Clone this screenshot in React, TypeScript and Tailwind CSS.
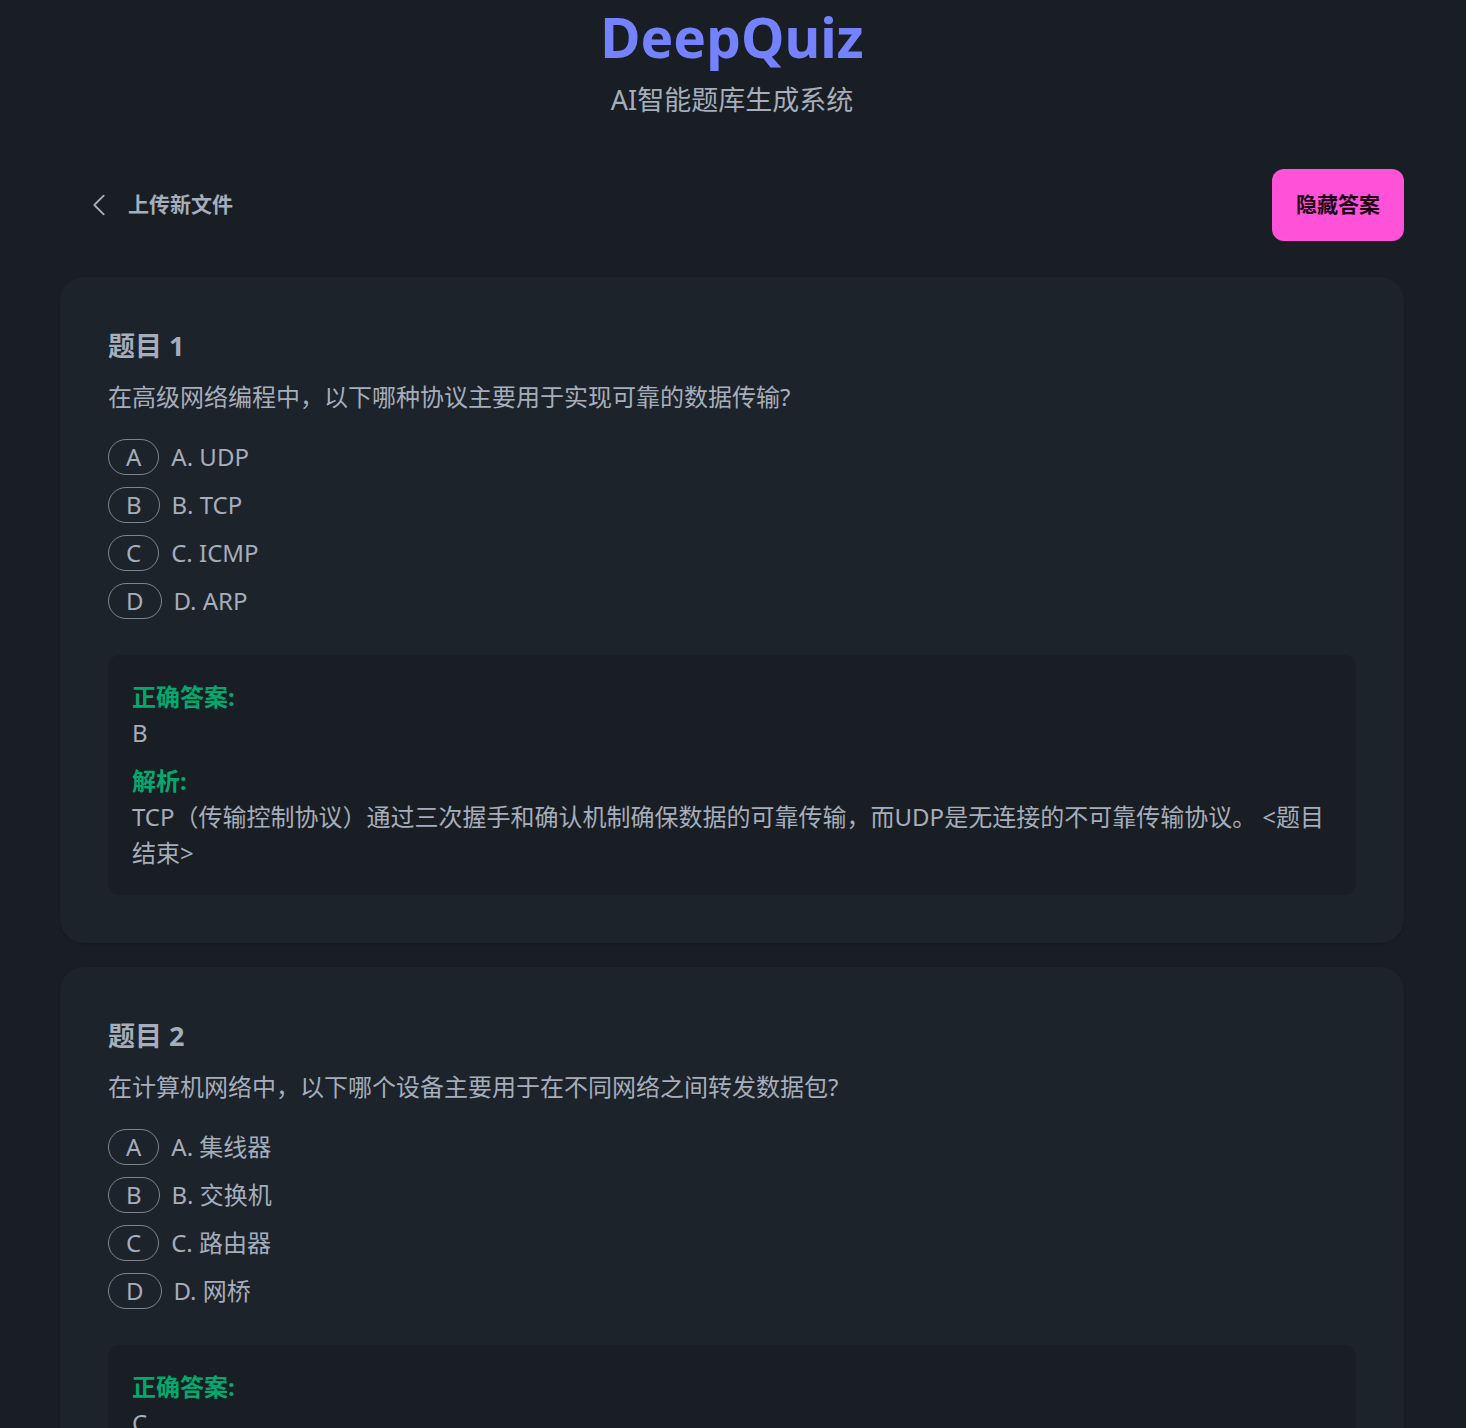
import React, { useState } from 'react';

interface Question {
  id: number;
  question: string;
  options: { key: string; text: string }[];
  answer: string;
  explanation: string;
}

const questions: Question[] = [
  {
    id: 1,
    question: '在高级网络编程中，以下哪种协议主要用于实现可靠的数据传输?',
    options: [
      { key: 'A', text: 'A. UDP' },
      { key: 'B', text: 'B. TCP' },
      { key: 'C', text: 'C. ICMP' },
      { key: 'D', text: 'D. ARP' },
    ],
    answer: 'B',
    explanation:
      'TCP（传输控制协议）通过三次握手和确认机制确保数据的可靠传输，而UDP是无连接的不可靠传输协议。 <题目结束>',
  },
  {
    id: 2,
    question: '在计算机网络中，以下哪个设备主要用于在不同网络之间转发数据包?',
    options: [
      { key: 'A', text: 'A. 集线器' },
      { key: 'B', text: 'B. 交换机' },
      { key: 'C', text: 'C. 路由器' },
      { key: 'D', text: 'D. 网桥' },
    ],
    answer: 'C',
    explanation: '路由器工作在网络层，根据IP地址在不同网络之间选择路径并转发数据包。 <题目结束>',
  },
];

const ChevronLeft = () => (
  <svg viewBox="0 0 24 24" fill="none" stroke="currentColor" strokeWidth={1.5} className="w-[30px] h-[30px]">
    <path strokeLinecap="round" strokeLinejoin="round" d="M15.75 19.5 8.25 12l7.5-7.5" />
  </svg>
);

const QuestionCard: React.FC<{ q: Question; showAnswer: boolean }> = ({ q, showAnswer }) => (
  <div className="bg-[#1d232a] rounded-[24px] p-12 shadow-sm">
    <h2 className="text-[27px] leading-[42px] font-bold text-[#a6adbb]">题目 {q.id}</h2>
    <p className="mt-3 text-[24px] leading-[36px] text-[#a6adbb]">{q.question}</p>

    <div className="mt-6 flex flex-col gap-3">
      {q.options.map((opt) => (
        <div key={opt.key} className="flex items-center gap-3">
          <span className="h-9 px-[17px] inline-flex items-center justify-center rounded-full border border-[#a6adbb]/70 text-[24px] text-[#a6adbb]">
            {opt.key}
          </span>
          <span className="text-[24px] leading-[36px] text-[#a6adbb]">{opt.text}</span>
        </div>
      ))}
    </div>

    {showAnswer && (
      <div className="mt-9 bg-[#191e24] rounded-[12px] p-6 text-[24px] leading-[36px]">
        <p className="font-bold text-[#00a96e]">正确答案:</p>
        <p className="text-[#a6adbb]">{q.answer}</p>
        <p className="mt-3 font-bold text-[#00a96e]">解析:</p>
        <p className="text-[#a6adbb]">{q.explanation}</p>
      </div>
    )}
  </div>
);

export default function App() {
  const [showAnswer, setShowAnswer] = useState(true);

  return (
    <div
      className="min-h-screen bg-[#191e24] text-[#a6adbb]"
      style={{ fontFamily: "'Noto Sans', 'Noto Sans CJK SC', sans-serif" }}
    >
      <div className="w-[1344px] ml-[60px] pb-12">
        {/* Header */}
        <div className="text-center">
          <h1 className="pt-[4px] text-[55px] leading-[66px] font-bold text-[#7582ff]">DeepQuiz</h1>
          <p className="mt-[9px] text-[27px] leading-[42px] text-[#a6adbb]">AI智能题库生成系统</p>
        </div>

        {/* Toolbar */}
        <div className="mt-12 flex items-center justify-between">
          <button className="h-[72px] px-6 flex items-center rounded-[12px] text-[#a6adbb] hover:bg-white/5">
            <ChevronLeft />
            <span className="ml-[14px] text-[21px] font-bold">上传新文件</span>
          </button>
          <button
            onClick={() => setShowAnswer(!showAnswer)}
            className="h-[72px] px-6 rounded-[12px] bg-[#ff52d9] text-[#190211] text-[21px] font-bold"
          >
            {showAnswer ? '隐藏答案' : '显示答案'}
          </button>
        </div>

        {/* Questions */}
        <div className="mt-9 flex flex-col gap-6">
          {questions.map((q) => (
            <QuestionCard key={q.id} q={q} showAnswer={showAnswer} />
          ))}
        </div>
      </div>
    </div>
  );
}
